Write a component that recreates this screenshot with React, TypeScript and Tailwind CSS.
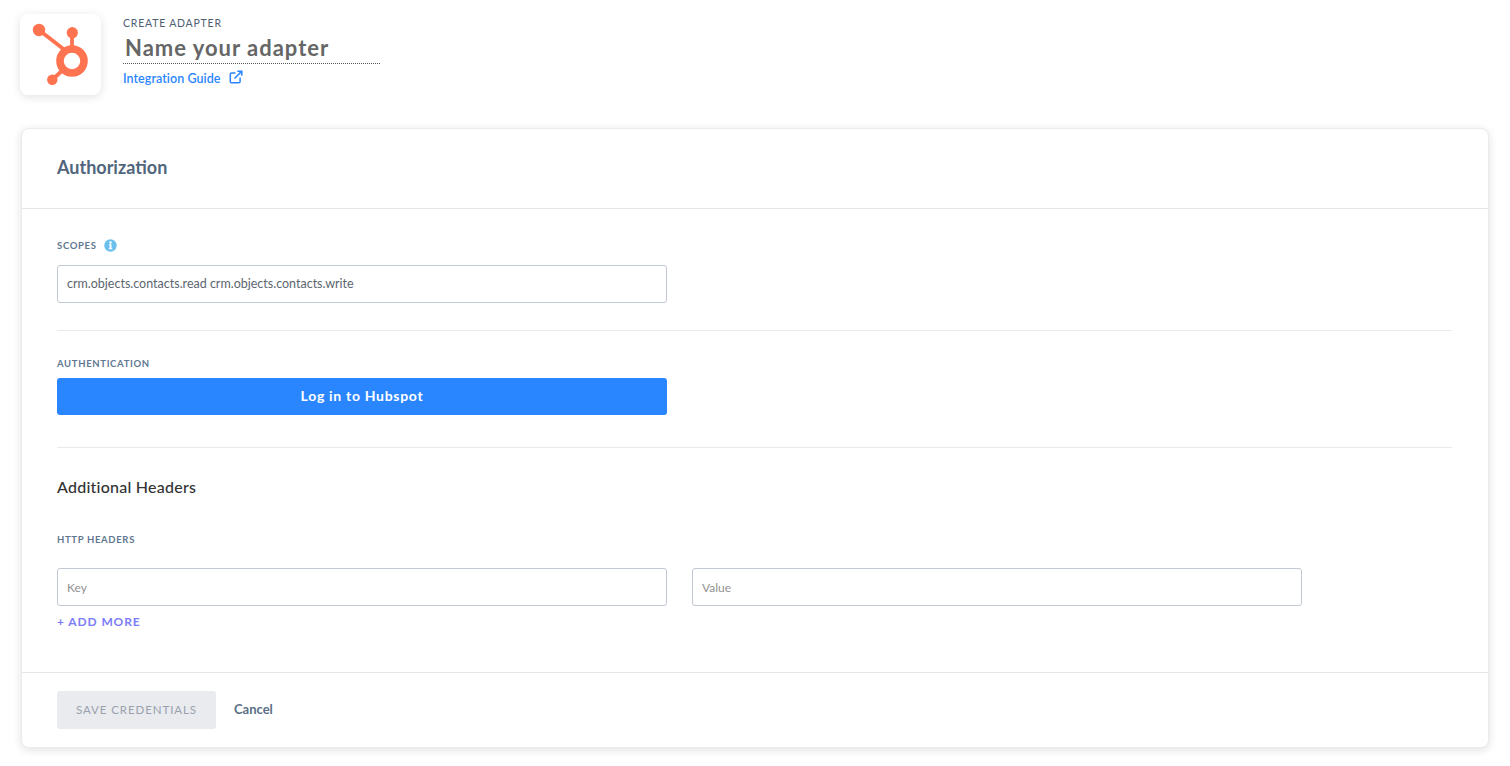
import React from 'react';

const font = { sans: 'font-["Lato","Liberation_Sans",sans-serif]' };

function HubspotLogo() {
  return (
    <svg width="81" height="81" viewBox="0 0 81 81" fill="none">
      <line x1="19" y1="16" x2="46" y2="37" stroke="#ff7350" strokeWidth="3.8" />
      <line x1="52" y1="19" x2="52" y2="36" stroke="#ff7350" strokeWidth="3.8" />
      <line x1="32.5" y1="65.5" x2="44" y2="55" stroke="#ff7350" strokeWidth="3.8" />
      <circle cx="19" cy="16" r="6.2" fill="#ff7350" />
      <circle cx="52.3" cy="18.7" r="5.6" fill="#ff7350" />
      <circle cx="32.3" cy="65.7" r="5.2" fill="#ff7350" />
      <circle cx="52" cy="47" r="12" stroke="#ff7350" strokeWidth="7.6" />
    </svg>
  );
}

function InfoIcon() {
  return (
    <svg width="13" height="13" viewBox="0 0 13 13">
      <circle cx="6.5" cy="6.5" r="6.2" fill="#6cc0ee" />
      <circle cx="6.5" cy="3.4" r="1.25" fill="#fff" />
      <path d="M4.9 5.3h2.6v3.9h.8v1H4.7v-1h.9V6.3h-.7z" fill="#fff" />
    </svg>
  );
}

function LinkIcon() {
  return (
    <svg className="ml-[9px] -mt-[3px]" width="14" height="14" viewBox="0 0 14 14" fill="none" stroke="#2a86ff" strokeWidth="1.5">
      <path d="M6.5 3H2.6a1.3 1.3 0 0 0-1.3 1.3v7.2a1.3 1.3 0 0 0 1.3 1.3h7.2a1.3 1.3 0 0 0 1.3-1.3V7.6" />
      <path d="M5.5 8.5 12.6 1.4M8.3 1.2h4.5v4.5" />
    </svg>
  );
}

function FieldLabel({ children }: { children: React.ReactNode }) {
  return <div className="text-[9.5px] leading-3 font-bold tracking-[0.07em] uppercase text-[#5f7890]">{children}</div>;
}

export default function App() {
  return (
    <div className={`h-[766px] bg-white px-5 pt-[14px] overflow-hidden ${font.sans}`}>
      {/* HEADER */}
      <div className="flex">
        <div className="w-[81px] h-[81px] rounded-lg bg-white shadow-[0_2px_10px_rgba(0,0,0,0.12)]">
          <HubspotLogo />
        </div>
        <div className="ml-[22px] w-[257px]">
          <div className="mt-[3px] text-[10.5px] leading-3 tracking-[0.075em] uppercase text-[#4f6073]">Create Adapter</div>
          <div className="mt-[3px] h-[32px] border-b border-dotted border-[#555] pl-[2px] text-[22px] leading-[31px] font-bold tracking-[0.045em] text-[#666]">
            Name your adapter
          </div>
          <div className="mt-[7px] flex items-center text-[12.5px] leading-[15px] font-semibold tracking-[0.004em] text-[#2a86ff]">
            Integration Guide
            <LinkIcon />
          </div>
        </div>
      </div>

      {/* CARD */}
      <div className="mt-[33px] ml-px mr-px h-[620px] rounded-lg border border-[#e9ebef] bg-white shadow-[0_2px_10px_rgba(0,0,0,0.12)] flex flex-col">
        <div className="h-[80px] flex items-center pl-[35px] pr-9 pb-[2px] border-b border-[#e4e6ea] text-[18px] font-bold text-[#51667c]">
          Authorization
        </div>

        <div className="flex-1 pl-[35px] pr-9">
          <div className="pt-[30px] pb-[27px] border-b border-[#e9e9ec]">
            <div className="flex items-center gap-[7px] h-[13px]">
              <FieldLabel>Scopes</FieldLabel>
              <InfoIcon />
            </div>
            <div className="mt-[13px] w-[610px] h-[38px] flex items-center px-[9px] rounded-[3px] border border-[#c1c7d3] text-[12.5px] text-[#5c6670]">
              crm.objects.contacts.read crm.objects.contacts.write
            </div>
          </div>

          <div className="pt-[27px] pb-[32px] border-b border-[#e9e9ec]">
            <FieldLabel>Authentication</FieldLabel>
            <div className="mt-[8px] w-[610px] h-[37px] pb-[2px] flex items-center justify-center rounded-[3px] bg-[#2a86ff] text-[14px] font-bold tracking-[0.05em] text-white">
              Log in to Hubspot
            </div>
          </div>

          <div className="mt-[29px] text-[16px] leading-5 font-medium tracking-[0.015em] text-[#333]">Additional Headers</div>
          <div className="mt-[37px]">
            <FieldLabel>HTTP Headers</FieldLabel>
          </div>
          <div className="mt-[22px] flex gap-[25px]">
            <div className="w-[610px] h-[38px] pt-[2px] flex items-center px-[9px] rounded-[3px] border border-[#c1c7d3] text-[12px] text-[#929292]">Key</div>
            <div className="w-[610px] h-[38px] pt-[2px] flex items-center px-[9px] rounded-[3px] border border-[#c1c7d3] text-[12px] text-[#929292]">Value</div>
          </div>
          <div className="mt-[8px] text-[12px] leading-[15px] font-bold tracking-[0.075em] uppercase text-[#7c7cf8]">+ Add More</div>
        </div>

        <div className="h-[75px] flex items-center pl-[35px] pr-9 border-t border-[#e4e6ea]">
          <div className="w-[159px] h-[38px] flex items-center justify-center rounded-[3px] bg-[#e9ebef] text-[11.5px] tracking-[0.08em] uppercase text-[#98a1ac]">
            Save Credentials
          </div>
          <div className="ml-[18px] text-[13px] font-bold text-[#5a6f86]">Cancel</div>
        </div>
      </div>
    </div>
  );
}
